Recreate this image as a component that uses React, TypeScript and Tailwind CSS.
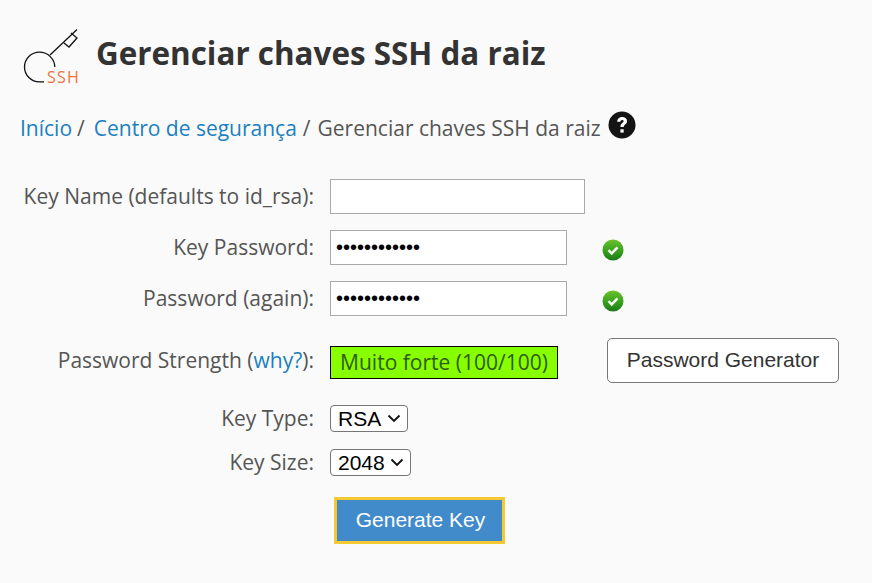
import React from "react";

const Check = () => (
  <svg width="22" height="22" viewBox="0 0 22 22" aria-hidden="true">
    <defs>
      <linearGradient id="g" x1="0" y1="0" x2="0" y2="1">
        <stop offset="0" stopColor="#6cc22c" />
        <stop offset="0.55" stopColor="#37a01c" />
        <stop offset="1" stopColor="#1c7a18" />
      </linearGradient>
    </defs>
    <circle cx="11" cy="11" r="10.5" fill="url(#g)" />
    <path d="M6.5 11.2l3.2 3.2 5.8-6" fill="none" stroke="#f2f7ee" strokeWidth="2.6" />
  </svg>
);

const Help = () => (
  <svg width="28" height="28" viewBox="0 0 28 28" aria-hidden="true">
    <circle cx="14" cy="14" r="13.5" fill="#141414" />
    <path d="M9.2 10.8c0-3 2.2-4.8 5-4.8 2.900 0 4.900 1.700 4.900 4.100 0 3.400-3.400 3.400-3.400 6h-3.300c0-4 3.200-4 3.200-5.800 0-.9-.6-1.400-1.500-1.400-1 0-1.600.7-1.700 1.900z" fill="#fff" />
    <rect x="12.400" y="18.300" width="3.300" height="3.300" fill="#fff" />
  </svg>
);

const Logo = () => (
  <svg width="62" height="58" viewBox="0 0 62 58" aria-hidden="true">
    <path d="M22 52.900H17.500C9.200 52.900 2.500 46.200 2.500 38S9.200 23.200 17.500 23.200 32.800 30 32.800 38" fill="none" stroke="#111" strokeWidth="1.3" />
    <path d="M28 26L55 .5M42 14l5 4 8-9-6-5" fill="none" stroke="#111" strokeWidth="1.3" />
    <text x="25" y="54" fontSize="16" letterSpacing="1.2" fill="#f0733d" fontFamily="'Open Sans', sans-serif">SSH</text>
  </svg>
);

const Chevron = () => (
  <svg className="pointer-events-none absolute right-[7px] top-[9px]" width="14" height="9" viewBox="0 0 14 9" aria-hidden="true">
    <path d="M1.500 1.500L7 7l5.500-5.500" fill="none" stroke="#111" strokeWidth="1.900" />
  </svg>
);

const Label = ({ children }: { children: React.ReactNode }) => (
  <label className="w-[314px] shrink-0 text-right text-[21px] text-[#555] whitespace-nowrap">{children}</label>
);

const inputCls =
  "h-[35px] border border-[#a9a9a9] bg-white px-[5px] text-[20px] text-black font-['Liberation_Sans',sans-serif] outline-none";
const selectCls =
  "h-[27px] w-full appearance-none rounded-[4px] border border-[#767676] bg-white pl-[7px] text-[21px] leading-[25px] text-black font-['Liberation_Sans',sans-serif]";

export default function App() {
  return (
    <div className="h-[583px] w-[872px] overflow-hidden bg-[#fafafa] font-['Open_Sans',sans-serif]">
      <header className="flex items-start pl-[22px] pt-[29px]">
        <Logo />
        <h1 className="ml-[12px] mt-[3px] whitespace-nowrap text-[31.400px] font-bold leading-[42px] text-[#333]">
          Gerenciar chaves SSH da raiz
        </h1>
      </header>
      <nav className="mt-[27px] flex items-center pl-[20px] text-[21px] leading-[28px] text-[#555]">
        <a className="text-[#1b80c0]">Início</a>
        <span className="ml-[5px]">/</span>
        <a className="ml-[9px] text-[#1b80c0]">Centro de segurança</a>
        <span className="ml-[6px]">/</span>
        <span className="ml-[7px]">Gerenciar chaves SSH da raiz</span>
        <span className="ml-[7px] -mt-[6px]"><Help /></span>
      </nav>
      <form className="mt-[37px] flex flex-col">
        <div className="flex h-[35px] items-center">
          <Label>Key Name (defaults to id_rsa):</Label>
          <input className={`${inputCls} ml-[16px] w-[255px]`} />
        </div>
        <div className="mt-[16px] flex h-[35px] items-center">
          <Label>Key Password:</Label>
          <input type="password" defaultValue="abcdefghijkl" className={`${inputCls} ml-[16px] w-[237px]`} />
          <span className="ml-[35px] mt-[5px]"><Check /></span>
        </div>
        <div className="mt-[16px] flex h-[35px] items-center">
          <Label>Password (again):</Label>
          <input type="password" defaultValue="abcdefghijkl" className={`${inputCls} ml-[16px] w-[237px]`} />
          <span className="ml-[35px] mt-[5px]"><Check /></span>
        </div>
        <div className="mt-[22px] flex h-[45px] items-center">
          <Label>
            Password Strength (<a className="text-[#1b80c0]">why?</a>):
          </Label>
          <div className="ml-[16px] mt-[3px] flex h-[33px] w-[228px] items-center justify-center whitespace-nowrap border border-black bg-[#88ff00] pt-[2px] text-[21px] text-[#2f5c0c]">
            Muito forte (100/100)
          </div>
          <button type="button" className="ml-[49px] h-[45px] w-[232px] rounded-[5px] border border-[#777] bg-white pb-[2px] text-[21px] text-[#333] font-['Liberation_Sans',sans-serif]">
            Password Generator
          </button>
        </div>
        <div className="mt-[22px] flex h-[27px] items-center">
          <Label>Key Type:</Label>
          <div className="relative ml-[16px] w-[78px]">
            <select className={selectCls} defaultValue="RSA">
              <option>RSA</option>
            </select>
            <Chevron />
          </div>
        </div>
        <div className="mt-[17px] flex h-[27px] items-center">
          <Label>Key Size:</Label>
          <div className="relative ml-[16px] w-[81px]">
            <select className={selectCls} defaultValue="2048">
              <option>2048</option>
            </select>
            <Chevron />
          </div>
        </div>
        <div className="mt-[21px] pl-[334px]">
          <button type="button" className="h-[47px] w-[171px] border-[3px] border-[#f5c932] bg-[#428bca] pb-[2px] pl-[2px] text-[21px] text-white font-['Liberation_Sans',sans-serif]">
            Generate Key
          </button>
        </div>
      </form>
    </div>
  );
}
